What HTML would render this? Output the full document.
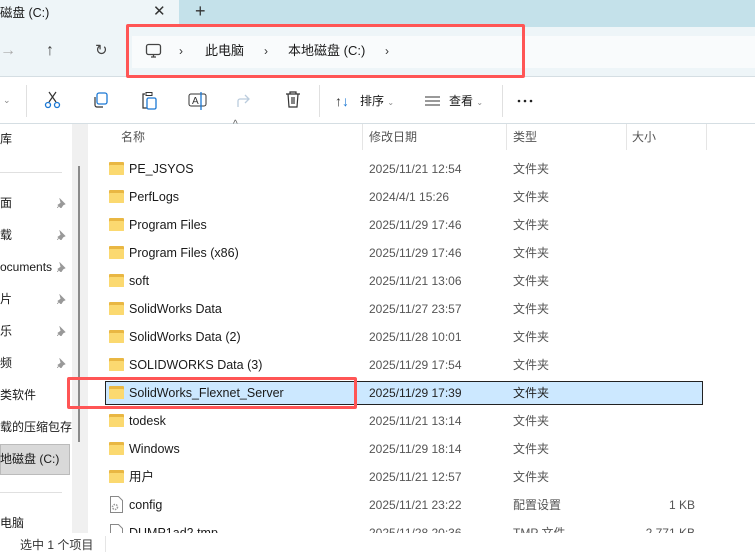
<!DOCTYPE html>
<html><head><meta charset="utf-8"><style>
*{margin:0;padding:0;box-sizing:border-box}
body{width:755px;height:554px;overflow:hidden;background:#fff;font-family:"Liberation Sans","Noto Sans CJK SC",sans-serif;font-size:12px;line-height:16px;color:#1a1a1a;position:relative}
.a{position:absolute;white-space:nowrap}
.row{position:absolute;left:105px;width:598px;height:24px}
.fold{position:absolute;left:4px;top:5px;width:15px;height:13px;background:#e9b743;border-radius:1px}
.fold:after{content:"";position:absolute;left:0;top:3px;width:15px;height:10px;background:#fbd970;border-radius:1px}
.n{position:absolute;left:24px;top:4px;font-size:12.5px;color:#1a1a1a}
.d{position:absolute;left:264px;top:4px;color:#555}
.t{position:absolute;left:408px;top:4px;color:#555}
.s{position:absolute;right:8px;top:4px;color:#555}
.side{position:absolute;left:0;font-size:12px;color:#1a1a1a}
.pin{position:absolute;left:57px}
</style></head><body>
<!-- tab bar -->
<div class="a" style="left:0;top:0;width:755px;height:27px;background:#c4e1ea"></div>
<div class="a" style="left:0;top:0;width:179px;height:27px;background:#eef5f8"></div>
<div class="a" style="left:0;top:5px;font-size:12.5px">磁盘 (C:)</div>
<div class="a" style="left:153px;top:4px;font-size:15px;color:#333">✕</div>
<div class="a" style="left:195px;top:3px;font-size:18px;color:#333">+</div>
<!-- address row -->
<div class="a" style="left:0;top:27px;width:755px;height:50px;background:#eef5f8;border-bottom:1px solid #d5dee3"></div>
<div class="a" style="left:0;top:43px;font-size:16px;color:#aaa">→</div>
<div class="a" style="left:46px;top:43px;font-size:16px;color:#444">↑</div>
<div class="a" style="left:95px;top:43px;font-size:15px;color:#444">↻</div>
<div class="a" style="left:132px;top:36px;width:623px;height:32px;background:#f9fbfc"></div>
<svg class="a" style="left:145px;top:43px" width="18" height="17"><rect x="1.5" y="1.5" width="14" height="10" rx="2" fill="none" stroke="#444" stroke-width="1.3"/><path d="M6 14h5M8.5 11.5v2.5" stroke="#444" stroke-width="1.3"/></svg>
<div class="a" style="left:179px;top:43px;color:#333">›</div>
<div class="a" style="left:205px;top:43px;font-size:13px">此电脑</div>
<div class="a" style="left:264px;top:43px;color:#333">›</div>
<div class="a" style="left:288px;top:43px;font-size:13px">本地磁盘 (C:)</div>
<div class="a" style="left:385px;top:43px;color:#333">›</div>
<div class="a" style="left:126px;top:24px;width:399px;height:54px;border:3px solid #f55;border-radius:2px"></div>
<!-- toolbar -->
<div class="a" style="left:3px;top:92px;font-size:9px;color:#888">⌄</div>
<div class="a" style="left:26px;top:85px;width:1px;height:32px;background:#e0e0e0"></div>
<svg class="a" style="left:44px;top:91px" width="18" height="18"><path d="M5 1l7 10M12 1L5 11" stroke="#333" stroke-width="1.2" fill="none"/><circle cx="4" cy="14" r="2.5" fill="none" stroke="#1b78d4" stroke-width="1.3"/><circle cx="13" cy="14" r="2.5" fill="none" stroke="#1b78d4" stroke-width="1.3"/></svg>
<svg class="a" style="left:92px;top:92px" width="18" height="18"><rect x="5" y="1" width="10" height="11" rx="2" fill="none" stroke="#1b78d4" stroke-width="1.3"/><path d="M3 5v8a2 2 0 0 0 2 2h6" fill="none" stroke="#333" stroke-width="1.2"/></svg>
<svg class="a" style="left:140px;top:91px" width="18" height="20"><path d="M5 3H3v14h4" fill="none" stroke="#333" stroke-width="1.2"/><rect x="6" y="1.5" width="6" height="3" fill="none" stroke="#333"/><rect x="7" y="7" width="9" height="11" rx="1.5" fill="none" stroke="#1b78d4" stroke-width="1.3"/></svg>
<svg class="a" style="left:188px;top:91px" width="20" height="20"><rect x="1" y="3" width="17" height="12" rx="2" fill="none" stroke="#333"/><text x="4" y="13" font-size="10" fill="#333" font-family="Liberation Sans">A</text><path d="M13 1v18" stroke="#1b78d4" stroke-width="1.3"/></svg>
<svg class="a" style="left:236px;top:93px" width="18" height="16"><path d="M2 14V8a2 2 0 0 1 2-2h8M9 2l4 4-4 4" fill="none" stroke="#bcd" stroke-width="1.3"/></svg>
<svg class="a" style="left:285px;top:91px" width="16" height="18"><path d="M1 3h14M5 3V1h6v2M3 3l1 13h8l1-13M7 6v7M9 6v7" fill="none" stroke="#333" stroke-width="1.2"/></svg>
<div class="a" style="left:319px;top:85px;width:1px;height:32px;background:#e0e0e0"></div>
<div class="a" style="left:335px;top:93px;font-size:14px;color:#333">↑<span style="color:#1b78d4">↓</span></div>
<div class="a" style="left:360px;top:93px">排序 <span style="font-size:8px;color:#888">⌄</span></div>
<svg class="a" style="left:425px;top:96px" width="16" height="10"><path d="M0 1h15M0 5h15M0 9h15" stroke="#333"/></svg>
<div class="a" style="left:449px;top:93px">查看 <span style="font-size:8px;color:#888">⌄</span></div>
<div class="a" style="left:502px;top:85px;width:1px;height:32px;background:#e0e0e0"></div>
<svg class="a" style="left:517px;top:99px" width="18" height="4"><circle cx="2" cy="2" r="1.3" fill="#222"/><circle cx="8" cy="2" r="1.3" fill="#222"/><circle cx="14" cy="2" r="1.3" fill="#222"/></svg>
<div class="a" style="left:0;top:123px;width:755px;height:1px;background:#d5dee3"></div>
<!-- sidebar -->
<div class="a" style="left:72px;top:124px;width:16px;height:410px;background:#f0f0f0"></div>
<div class="a" style="left:78px;top:166px;width:2px;height:276px;background:#8a8a8a"></div>
<div class="side" style="top:131px">库</div>
<div class="a" style="left:0;top:172px;width:62px;height:1px;background:#e0e0e0"></div>
<svg width="0" height="0" style="position:absolute"><defs><g id="p"><path d="M3 1l5 5-2 1-2 3-3-3 3-2z M2.5 7.5L0 10" fill="#999" stroke="#999" stroke-width=".8"/></g></defs></svg>
<div class="side" style="top:195px">面</div><svg class="pin" style="top:198px" width="10" height="10"><use href="#p"/></svg>
<div class="side" style="top:227px">载</div><svg class="pin" style="top:230px" width="10" height="10"><use href="#p"/></svg>
<div class="side" style="top:259px">ocuments</div><svg class="pin" style="top:262px" width="10" height="10"><use href="#p"/></svg>
<div class="side" style="top:291px">片</div><svg class="pin" style="top:294px" width="10" height="10"><use href="#p"/></svg>
<div class="side" style="top:323px">乐</div><svg class="pin" style="top:326px" width="10" height="10"><use href="#p"/></svg>
<div class="side" style="top:355px">频</div><svg class="pin" style="top:358px" width="10" height="10"><use href="#p"/></svg>
<div class="side" style="top:387px">类软件</div>
<div class="side" style="top:419px">载的压缩包存</div>
<div class="a" style="left:0;top:444px;width:70px;height:31px;background:#d9d9d9;border:1px solid #bbb"></div>
<div class="side" style="top:451px">地磁盘 (C:)</div>
<div class="a" style="left:0;top:492px;width:62px;height:1px;background:#e0e0e0"></div>
<div class="side" style="top:515px">电脑</div>
<!-- header -->
<div class="a" style="left:121px;top:129px;color:#555">名称</div>
<div class="a" style="left:233px;top:117px;font-size:10px;color:#555">^</div>
<div class="a" style="left:362px;top:124px;width:1px;height:26px;background:#e5e5e5"></div>
<div class="a" style="left:369px;top:129px;color:#555">修改日期</div>
<div class="a" style="left:506px;top:124px;width:1px;height:26px;background:#e5e5e5"></div>
<div class="a" style="left:513px;top:129px;color:#555">类型</div>
<div class="a" style="left:626px;top:124px;width:1px;height:26px;background:#e5e5e5"></div>
<div class="a" style="left:632px;top:129px;color:#555">大小</div>
<div class="a" style="left:706px;top:124px;width:1px;height:26px;background:#e5e5e5"></div>
<!-- rows -->
<div style="position:absolute;left:0;top:0;width:755px;height:533px;overflow:hidden">
<div class="row" style="top:157px"><div class="fold"></div><div class="n">PE_JSYOS</div><div class="d">2025/11/21 12:54</div><div class="t">文件夹</div></div>
<div class="row" style="top:185px"><div class="fold"></div><div class="n">PerfLogs</div><div class="d">2024/4/1 15:26</div><div class="t">文件夹</div></div>
<div class="row" style="top:213px"><div class="fold"></div><div class="n">Program Files</div><div class="d">2025/11/29 17:46</div><div class="t">文件夹</div></div>
<div class="row" style="top:241px"><div class="fold"></div><div class="n">Program Files (x86)</div><div class="d">2025/11/29 17:46</div><div class="t">文件夹</div></div>
<div class="row" style="top:269px"><div class="fold"></div><div class="n">soft</div><div class="d">2025/11/21 13:06</div><div class="t">文件夹</div></div>
<div class="row" style="top:297px"><div class="fold"></div><div class="n">SolidWorks Data</div><div class="d">2025/11/27 23:57</div><div class="t">文件夹</div></div>
<div class="row" style="top:325px"><div class="fold"></div><div class="n">SolidWorks Data (2)</div><div class="d">2025/11/28 10:01</div><div class="t">文件夹</div></div>
<div class="row" style="top:353px"><div class="fold"></div><div class="n">SOLIDWORKS Data (3)</div><div class="d">2025/11/29 17:54</div><div class="t">文件夹</div></div>
<div class="row" style="top:381px;background:#cce8ff;border:1px solid #222"><div class="fold" style="top:4px;left:3px"></div><div class="n" style="top:3px;left:23px">SolidWorks_Flexnet_Server</div><div class="d" style="top:3px;left:263px;color:#222">2025/11/29 17:39</div><div class="t" style="top:3px;left:407px;color:#222">文件夹</div></div>
<div class="row" style="top:409px"><div class="fold"></div><div class="n">todesk</div><div class="d">2025/11/21 13:14</div><div class="t">文件夹</div></div>
<div class="row" style="top:437px"><div class="fold"></div><div class="n">Windows</div><div class="d">2025/11/29 18:14</div><div class="t">文件夹</div></div>
<div class="row" style="top:465px"><div class="fold"></div><div class="n">用户</div><div class="d">2025/11/21 12:57</div><div class="t">文件夹</div></div>
<div class="row" style="top:493px"><svg style="position:absolute;left:5px;top:3px" width="13" height="17"><path d="M.5.5h8l4 4v12H.5z" fill="#fff" stroke="#888"/><circle cx="5" cy="11" r="2.5" fill="none" stroke="#999" stroke-width="1.5" stroke-dasharray="1.5 1"/></svg><div class="n">config</div><div class="d">2025/11/21 23:22</div><div class="t">配置设置</div><div class="s">1 KB</div></div>
<div class="row" style="top:521px"><svg style="position:absolute;left:5px;top:3px" width="13" height="17"><path d="M.5.5h8l4 4v12H.5z" fill="#fff" stroke="#888"/></svg><div class="n">DUMP1ad2.tmp</div><div class="d">2025/11/28 20:36</div><div class="t">TMP 文件</div><div class="s">2,771 KB</div></div>
</div>
<div class="a" style="left:67px;top:377px;width:290px;height:32px;border:3px solid #f55;border-radius:2px"></div>
<!-- status -->
<div class="a" style="left:0;top:533px;width:755px;height:21px;background:#fff"></div>
<div class="a" style="left:20px;top:537px;color:#333">选中 1 个项目</div>
<div class="a" style="left:105px;top:536px;width:1px;height:16px;background:#e5e5e5"></div>
</body></html>
